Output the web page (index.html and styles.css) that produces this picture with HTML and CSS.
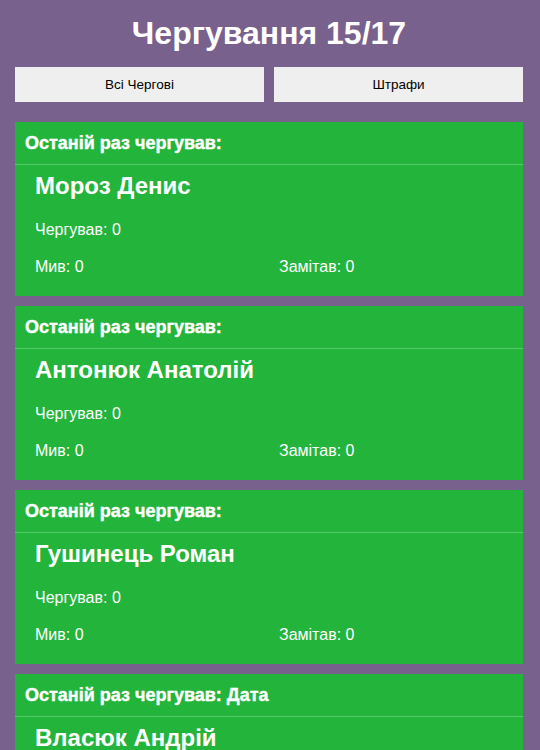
FILE: index.html
```html
<!DOCTYPE html>
<html lang="uk">
<head>
<meta charset="utf-8">
<title>Чергування</title>
<link rel="stylesheet" href="styles.css">
</head>
<body>
<div class="page">
  <h1 class="title">Чергування 15/17</h1>
  <div class="nav">
    <button class="btn">Всі Чергові</button>
    <button class="btn">Штрафи</button>
  </div>
  <div class="list">
    <div class="card">
      <div class="card-head">Останій раз чергував:</div>
      <div class="card-body">
        <div class="name">Мороз Денис</div>
        <div class="stat full">Чергував: 0</div>
        <div class="stat">Мив: 0</div>
        <div class="stat">Замітав: 0</div>
      </div>
    </div>
    <div class="card">
      <div class="card-head">Останій раз чергував:</div>
      <div class="card-body">
        <div class="name">Антонюк Анатолій</div>
        <div class="stat full">Чергував: 0</div>
        <div class="stat">Мив: 0</div>
        <div class="stat">Замітав: 0</div>
      </div>
    </div>
    <div class="card">
      <div class="card-head">Останій раз чергував:</div>
      <div class="card-body">
        <div class="name">Гушинець Роман</div>
        <div class="stat full">Чергував: 0</div>
        <div class="stat">Мив: 0</div>
        <div class="stat">Замітав: 0</div>
      </div>
    </div>
    <div class="card">
      <div class="card-head">Останій раз чергував: Дата</div>
      <div class="card-body">
        <div class="name">Власюк Андрій</div>
        <div class="stat full">Чергував: 0</div>
        <div class="stat">Мив: 0</div>
        <div class="stat">Замітав: 0</div>
      </div>
    </div>
  </div>
</div>
</body>
</html>
```
FILE: styles.css
```css
html, body {
  margin: 0;
  padding: 0;
  background: #78618c;
  font-family: "Liberation Sans", Arial, sans-serif;
  color: #fff;
}
.page {
  padding: 0 17px 20px 15px;
}
.title {
  margin: 0;
  padding: 14px 0 0;
  height: 53px;
  box-sizing: border-box;
  text-align: center;
  font-size: 32px;
  line-height: 38px;
  font-weight: bold;
}
.nav {
  display: grid;
  grid-template-columns: 1fr 1fr;
  gap: 10px;
  margin-top: 14px;
}
.btn {
  height: 35px;
  border: none;
  background: #efefef;
  color: #000;
  font-family: "Liberation Sans", Arial, sans-serif;
  font-size: 13.5px;
  padding: 0;
}
.list {
  display: flex;
  flex-direction: column;
  gap: 10px;
  margin-top: 20px;
}
.card {
  background: #23b43c;
  height: 174px;
}
.card-head {
  padding: 12px 10px;
  height: 43px;
  box-sizing: border-box;
  font-size: 18px;
  line-height: 19px;
  font-weight: bold;
  -webkit-text-stroke: 0.4px #fff;
  border-bottom: 1px solid #55c867;
}
.card-body {
  display: grid;
  grid-template-columns: 1fr 1fr;
  padding: 0 10px;
}
.name {
  grid-column: 1 / -1;
  padding: 7px 10px 0;
  font-size: 24px;
  line-height: 28px;
  font-weight: bold;
}
.stat {
  padding: 0 10px;
  font-size: 16px;
  line-height: 18px;
  margin-top: 19px;
}
.stat.full {
  grid-column: 1 / -1;
  margin-top: 21px;
}
```
